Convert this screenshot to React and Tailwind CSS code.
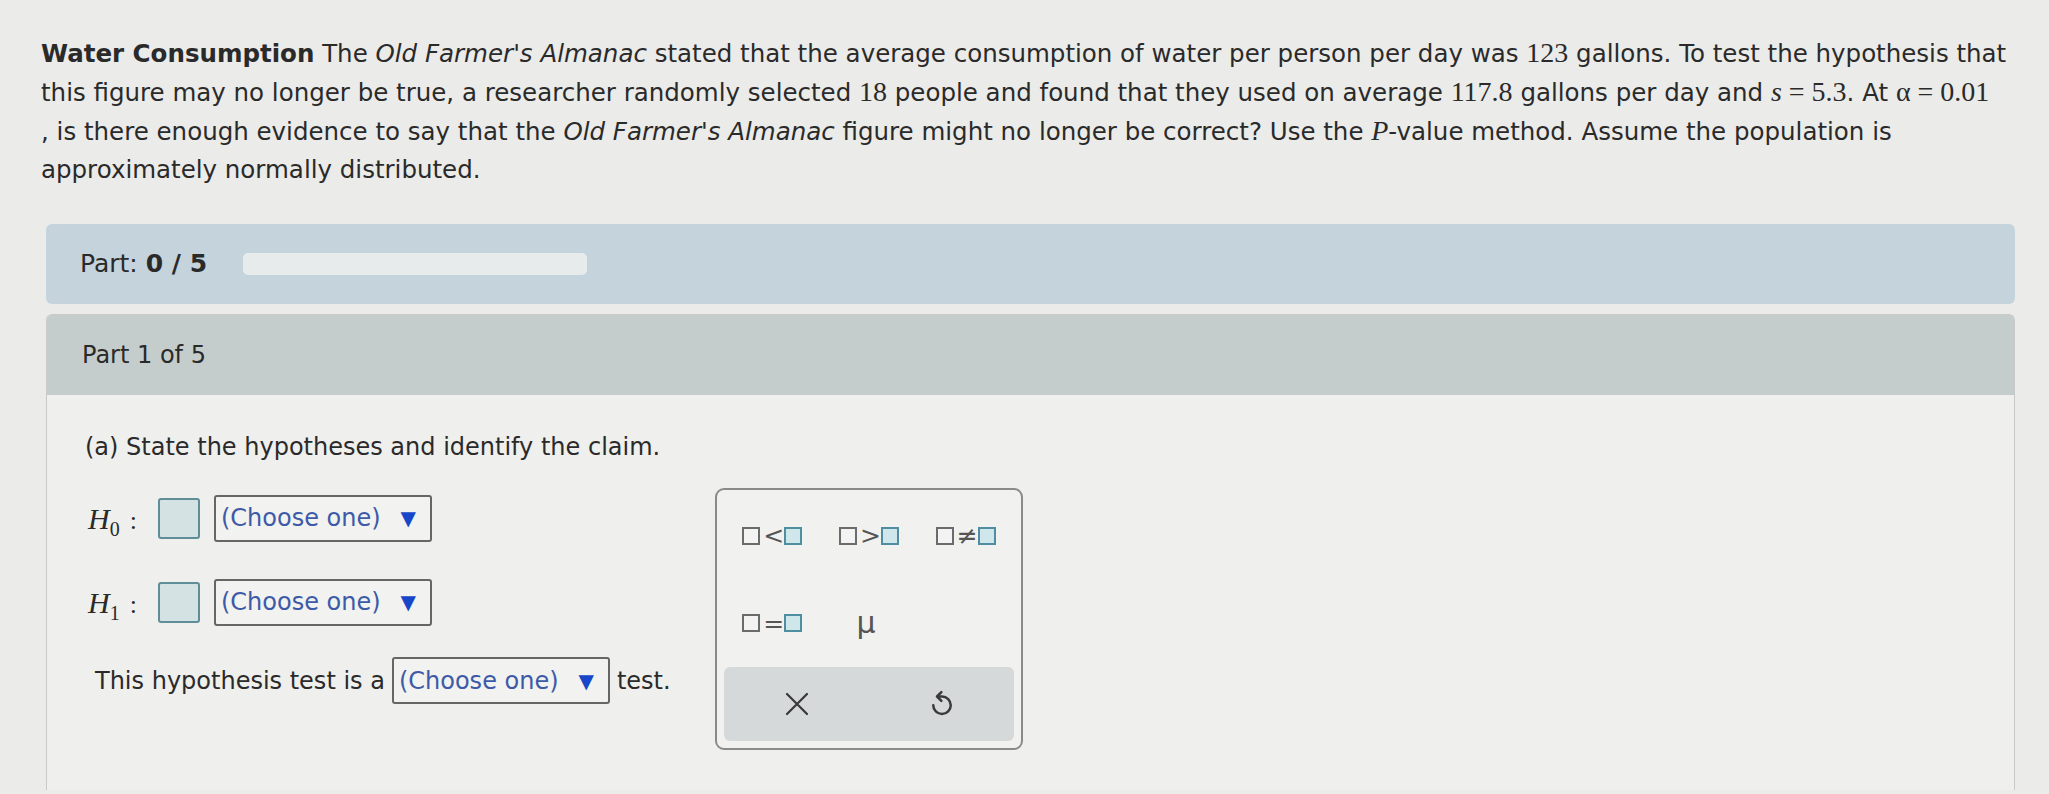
import React from "react";

const sans = { fontFamily: '"DejaVu Sans", Verdana, sans-serif' };

// serif math bits, like the MathJax output in the page
const M = ({ children, italic }) => (
  <span
    className={`text-[28px] ${italic ? "italic" : ""}`}
    style={{ fontFamily: '"Liberation Serif", "DejaVu Serif", serif' }}
  >
    {children}
  </span>
);

// little placeholder squares used in the relation buttons
const Sq = ({ filled }) => (
  <span
    className={
      filled
        ? "inline-block w-[18px] h-[18px] border-2 border-[#4f8da0] bg-[#cfe6ea]"
        : "inline-block w-[18px] h-[18px] border-2 border-[#6b6b6b] bg-[#f3f3f3]"
    }
  />
);

const Rel = ({ op }) => (
  <button className="flex items-center justify-center gap-[3px] text-[25px] text-[#555] leading-none">
    <Sq />
    <span className="w-[18px] text-center">{op}</span>
    <Sq filled />
  </button>
);

const Select = ({ className = "" }) => (
  <div
    className={`flex items-center justify-between h-[47px] w-[218px] border-2 border-[#666] rounded-[3px] bg-[#f2f2f0] pl-[5px] pr-[14px] ${className}`}
  >
    <span className="text-[24px] text-[#3d5aa8]">(Choose one)</span>
    <span className="text-[20px] text-[#1846c9]">▼</span>
  </div>
);

const Hyp = ({ sub }) => (
  <div className="flex items-center h-[48px]">
    <div className="w-[70px] flex items-baseline">
      <span className="text-[30px] italic" style={{ fontFamily: '"Liberation Serif", serif' }}>
        H
      </span>
      <span className="text-[20px] relative top-[7px]" style={{ fontFamily: '"Liberation Serif", serif' }}>
        {sub}
      </span>
      <span className="text-[26px] ml-[10px]" style={{ fontFamily: '"Liberation Serif", serif' }}>
        :
      </span>
    </div>
    <div className="w-[42px] h-[41px] border-2 border-[#5f8e99] rounded-[3px] bg-[#d4e2e4]" />
    <Select className="ml-[14px]" />
  </div>
);

export default function App() {
  return (
    <div className="min-h-[794px] bg-[#ebebe9] text-[#2a2a2a]" style={sans}>
      <div className="pl-[41px] pt-[34px] text-[24.5px] leading-[38px] whitespace-nowrap">
        <div>
          <b>Water Consumption</b> The <i>Old Farmer's Almanac</i> stated that the average consumption of water per person per day was <M>123</M> gallons. To test the hypothesis that
        </div>
        <div>
          this figure may no longer be true, a researcher randomly selected <M>18</M> people and found that they used on average <M>117.8</M> gallons per day and <M italic>s</M><M> = 5.3</M>. At <M>α = 0.01</M>
        </div>
        <div>
          , is there enough evidence to say that the <i>Old Farmer's Almanac</i> figure might no longer be correct? Use the <M italic>P</M>-value method. Assume the population is
        </div>
        <div>approximately normally distributed.</div>
      </div>

      <div className="ml-[46px] mr-[34px] mt-[35px]">
        {/* progress */}
        <div className="h-[80px] rounded-[6px] bg-[#c4d3dc] flex items-center pl-[34px] gap-[36px]">
          <span className="text-[25px]">
            Part: <b>0 / 5</b>
          </span>
          <div className="w-[344px] h-[22px] rounded-[5px] bg-[#e8ebec]" />
        </div>

        {/* part 1 */}
        <div className="mt-[10px] rounded-t-[6px] overflow-hidden border border-[#c9c9c7] border-b-0">
          <div className="h-[80px] bg-[#c5cdcc] flex items-center pl-[35px] text-[24px]">
            Part 1 of 5
          </div>
          <div className="h-[395px] bg-[#efefed] pl-[38px] pt-[33px]">
            <div className="text-[24px] leading-[38px]">(a) State the hypotheses and identify the claim.</div>
            <div className="flex mt-[22px]">
              <div className="w-[630px] pl-[3px]">
                <div className="mt-[6px]">
                  <Hyp sub="0" />
                </div>
                <div className="mt-[36px]">
                  <Hyp sub="1" />
                </div>
                <div className="mt-[31px] flex items-center gap-[7px] text-[24px] pl-[7px]">
                  <span>This hypothesis test is a</span>
                  <Select />
                  <span>test.</span>
                </div>
              </div>

              {/* relation palette */}
              <div className="w-[308px] h-[262px] border-2 border-[#8a8a8a] rounded-[9px] bg-[#f1f1ef] flex flex-col px-[7px] pb-[7px]">
                <div className="grid grid-cols-3 mt-[33px]">
                  <Rel op="<" />
                  <Rel op=">" />
                  <Rel op="≠" />
                </div>
                <div className="grid grid-cols-3 mt-[60px]">
                  <Rel op="=" />
                  <button
                    className="text-[30px] text-[#555] leading-none -ml-[6px]"
                    style={{ fontFamily: '"DejaVu Sans", sans-serif' }}
                  >
                    μ
                  </button>
                </div>
                <div className="mt-auto h-[74px] rounded-[6px] bg-[#d5d9d9] grid grid-cols-2 items-center">
                  <button className="flex justify-center">
                    <svg width="30" height="30" viewBox="0 0 24 24" fill="none" stroke="#3a3a3a" strokeWidth="1.8" strokeLinecap="round">
                      <path d="M4 4 L20 20 M20 4 L4 20" />
                    </svg>
                  </button>
                  <button className="flex justify-center">
                    <svg width="30" height="30" viewBox="0 0 24 24" fill="none" stroke="#3a3a3a" strokeWidth="2" strokeLinecap="round" strokeLinejoin="round">
                      <path d="M9 6 H12 A7 7 0 1 1 5 13" />
                      <path d="M11.5 2.5 L8 6 L11.5 9.5" />
                    </svg>
                  </button>
                </div>
              </div>
            </div>
          </div>
        </div>
      </div>
    </div>
  );
}
